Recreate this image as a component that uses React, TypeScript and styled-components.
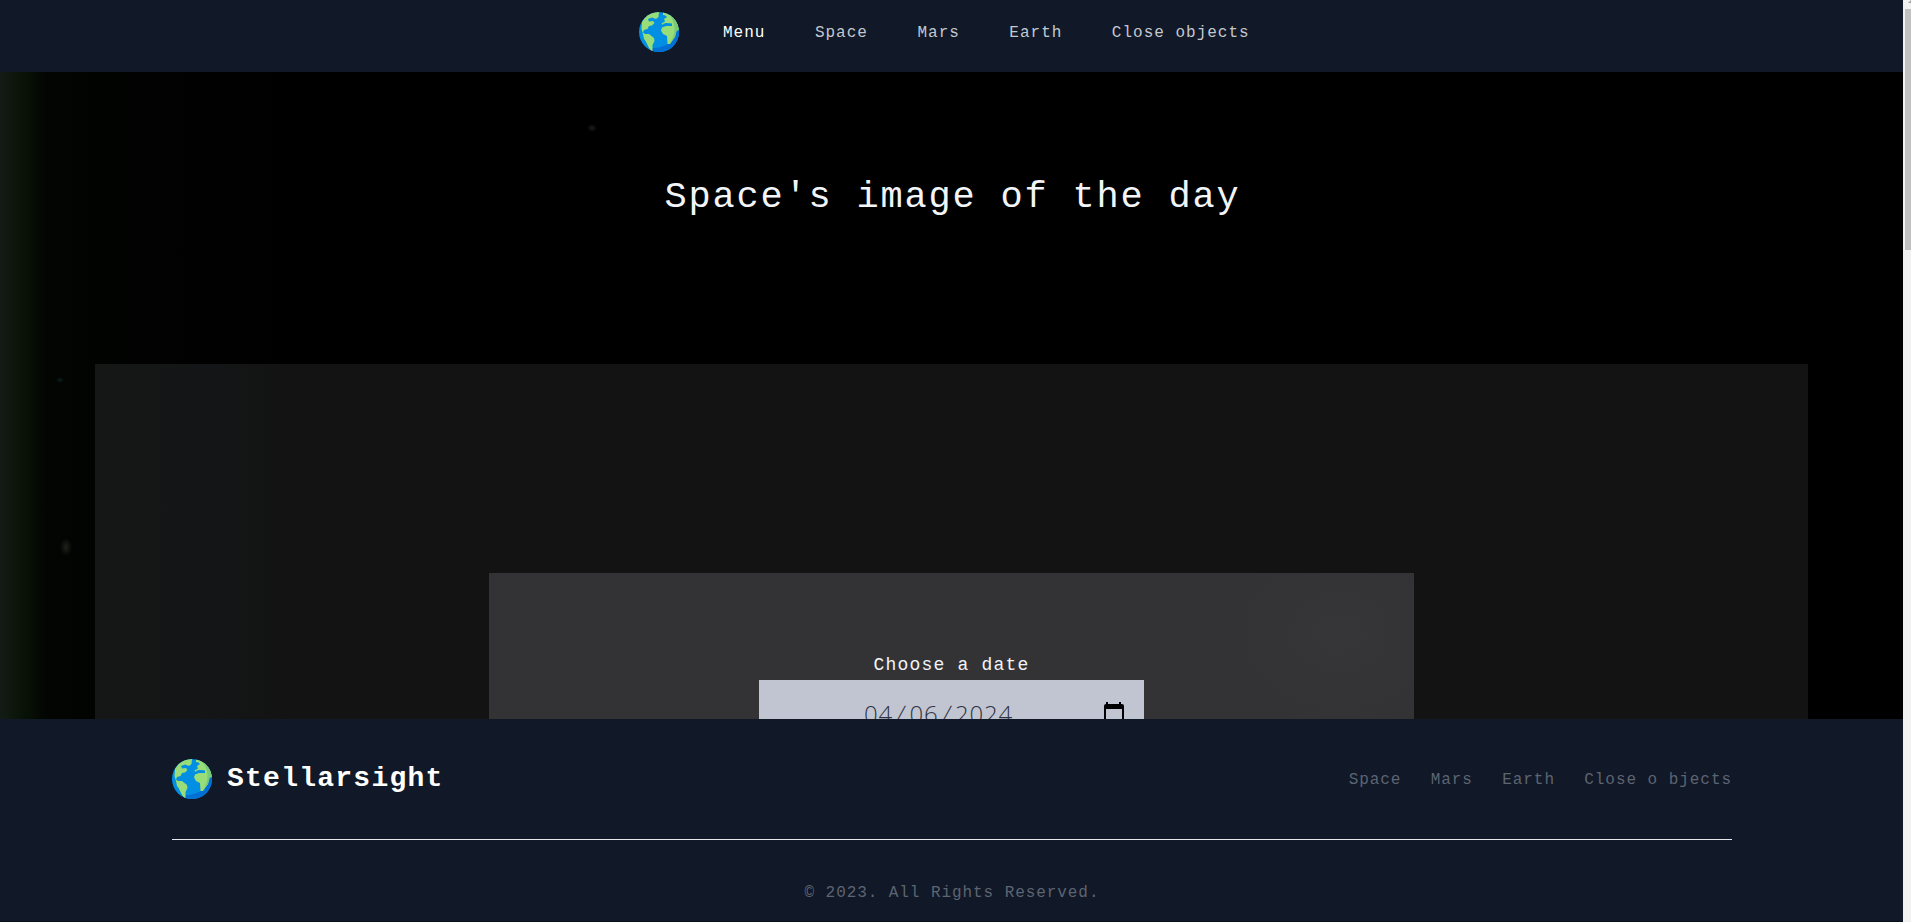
import React from "react";
import styled, { createGlobalStyle } from "styled-components";

const Global = createGlobalStyle`
  * { box-sizing: border-box; }
  html, body { margin: 0; height: 100%; overflow: hidden; }
  body { background: #000; font-family: "Liberation Mono", monospace; color: #fff; }
`;

const Screen = styled.div`
  display: flex;
  width: 100vw;
  height: 100vh;
  overflow: hidden;
`;

const Page = styled.div`
  flex: 1;
  min-width: 0;
  display: flex;
  flex-direction: column;
`;

const Header = styled.header`
  flex: none;
  height: 72px;
  padding: 12px 0 0 639px;
  display: flex;
  align-items: flex-start;
  background: #111827;
`;

const Nav = styled.nav`
  display: flex;
  gap: 49.5px;
  margin-left: 44px;
  font-size: 16px;
  letter-spacing: 1px;
  line-height: 42px;
  white-space: pre;
`;

const NavLink = styled.a<{ $active?: boolean }>`
  color: ${(p) => (p.$active ? "#ffffff" : "#c3c8d0")};
`;

const Hero = styled.main`
  flex: 1;
  min-height: 0;
  overflow: hidden;
  display: flex;
  flex-direction: column;
  align-items: center;
  background:
    radial-gradient(ellipse 5px 4px at 592px 56px, #1c1d1b, transparent),
    radial-gradient(ellipse 4px 3px at 60px 308px, #0b1f20, transparent),
    radial-gradient(ellipse 6px 9px at 66px 475px, #20211a, transparent),
    linear-gradient(90deg, #141b15 0, #0d160c 14px, #081006 28px, #020502 46px, #010201 140px, #000 280px);
`;

const Title = styled.h1`
  flex: none;
  margin: 101px 0 0;
  height: 191px;
  padding-left: 2px;
  font-size: 37px;
  line-height: 49px;
  font-weight: 400;
  letter-spacing: 1.8px;
  white-space: pre;
  color: #f1f5f9;
`;

const Panel = styled.section`
  flex: none;
  width: 1713px;
  height: 900px;
  padding-top: 209px;
  display: flex;
  flex-direction: column;
  align-items: center;
  background: linear-gradient(90deg, #151716 0, #141516 120px, #131313 190px, #131313 100%);
`;

const Card = styled.form`
  width: 925px;
  flex: 1;
  padding-top: 78px;
  display: flex;
  flex-direction: column;
  align-items: center;
  background: radial-gradient(ellipse 110px 90px at 850px 60px, #363638, #333335);
`;

const Label = styled.label`
  height: 29px;
  font-size: 18px;
  line-height: 28px;
  letter-spacing: 1.2px;
  color: #f1f5f9;
`;

const DateField = styled.div`
  width: 385px;
  height: 67px;
  padding: 0 19px 0 105px;
  display: flex;
  align-items: center;
  justify-content: space-between;
  background: #c1c5d1;
  color: #303545;
  font: 300 24px "Open Sans", sans-serif;
`;

const DateText = styled.span`
  display: flex;
  letter-spacing: 0.8px;
`;

const Digits = styled.span``;

const Slash = styled.span`
  width: 16.5px;
  text-align: center;
  transform: skewX(-10deg);
`;

const Footer = styled.footer`
  flex: none;
  height: 203px;
  padding: 40px 171px 0 172px;
  background: #111827;
  border-bottom: 1px solid #0b0f1c;
`;

const FooterRow = styled.div`
  height: 81px;
  display: flex;
  align-items: flex-start;
  border-bottom: 1px solid #e5e7eb;
`;

const Brand = styled.strong`
  margin-left: 15px;
  font-size: 28px;
  line-height: 40px;
  letter-spacing: 1.25px;
`;

const FooterNav = styled.nav`
  margin-left: auto;
  display: flex;
  gap: 29.3px;
  font-size: 16px;
  letter-spacing: 0.95px;
  line-height: 42px;
  color: #5d6472;
  white-space: pre;
`;

const Copyright = styled.p`
  margin: 39px 0 0;
  font-size: 16px;
  letter-spacing: 0.93px;
  line-height: 28px;
  text-align: center;
  color: #5d6472;
`;

const ScrollTrack = styled.aside`
  flex: none;
  width: 8px;
  display: flex;
  flex-direction: column;
  align-items: flex-end;
  background: #f1f1f1;
`;

const ScrollArrow = styled.svg`
  flex: none;
  display: block;
  width: 3px;
  height: 3px;
  margin-bottom: 6px;
`;

const ScrollThumb = styled.div`
  width: 6px;
  height: 241px;
  background: #c1c1c1;
`;

const GlobeSvg = styled.svg`
  flex: none;
  display: block;
  width: 40px;
  height: 40px;
`;

function Globe({ id }: { id: string }) {
  return (
    <GlobeSvg viewBox="0 0 40 40">
      <clipPath id={id}>
        <circle cx="20" cy="20" r="20" />
      </clipPath>
      <g clipPath={`url(#${id})`}>
        <rect width="40" height="40" fill="#008fe2" />
        <path d="M40 18 37.5 18C37 28 28 36 13 36L12 40H40Z" fill="#0070d5" />
        <path d="M3 10C7 3 13-1 20 0L19.5 5 17 7 13 5.5 9 7 10 9.5 14 9 15.5 11 13 13.5 10 14 8.5 17 5 18 4 20.5 6 22 10 22 15 26 15.5 29 13.5 33 13.5 40C9 36 8 30 5 27L4 22 2.5 17Z" fill="#98dd78" />
        <path d="M24 0C34 2 40 10 40 18L37 19 36 25 31 32H28.5L28 24 24 22 22 18.5 23 15.5 27 14 32 14 32.5 12 27 11.5 23 13 22.5 11.5 26 9.5 25 7 28 5 26.5 3.5 24 3Z" fill="#98dd78" />
        <path d="M31 4C37 11 37 23 31 30L36 25 38 18 40 18 39 10Z" fill="#76ca78" />
        <path d="M23 12.2 27 11 33 11.5V14L27 13.8Z" fill="#008fe2" />
      </g>
    </GlobeSvg>
  );
}

const CalendarSvg = styled.svg`
  width: 22px;
  height: 24px;
`;

function Calendar() {
  return (
    <CalendarSvg viewBox="0 0 22 24">
      <path d="M3 0H5V2H16V0H18V2H19Q21 2 21 4V21Q21 23 19 23H3Q1 23 1 21V4Q1 2 3 2ZM3 7V21H19V7Z" fill="#000" fillRule="evenodd" />
    </CalendarSvg>
  );
}

export default function App() {
  return (
    <Screen>
      <Global />
      <Page>
        <Header>
          <Globe id="header-globe" />
          <Nav>
            <NavLink $active>Menu</NavLink>
            <NavLink>Space</NavLink>
            <NavLink>Mars</NavLink>
            <NavLink>Earth</NavLink>
            <NavLink>Close objects</NavLink>
          </Nav>
        </Header>
        <Hero>
          <Title>Space's image of the day</Title>
          <Panel>
            <Card>
              <Label>Choose a date</Label>
              <DateField>
                <DateText>
                  <Digits>04</Digits>
                  <Slash>/</Slash>
                  <Digits>06</Digits>
                  <Slash>/</Slash>
                  <Digits>2024</Digits>
                </DateText>
                <Calendar />
              </DateField>
            </Card>
          </Panel>
        </Hero>
        <Footer>
          <FooterRow>
            <Globe id="footer-globe" />
            <Brand>Stellarsight</Brand>
            <FooterNav>
              <a>Space</a>
              <a>Mars</a>
              <a>Earth</a>
              <a>Close o bjects</a>
            </FooterNav>
          </FooterRow>
          <Copyright>© 2023. All Rights Reserved.</Copyright>
        </Footer>
      </Page>
      <ScrollTrack>
        <ScrollArrow viewBox="0 0 3 3">
          <path d="M3 0V3H0Z" fill="#a3a3a3" />
        </ScrollArrow>
        <ScrollThumb />
      </ScrollTrack>
    </Screen>
  );
}
